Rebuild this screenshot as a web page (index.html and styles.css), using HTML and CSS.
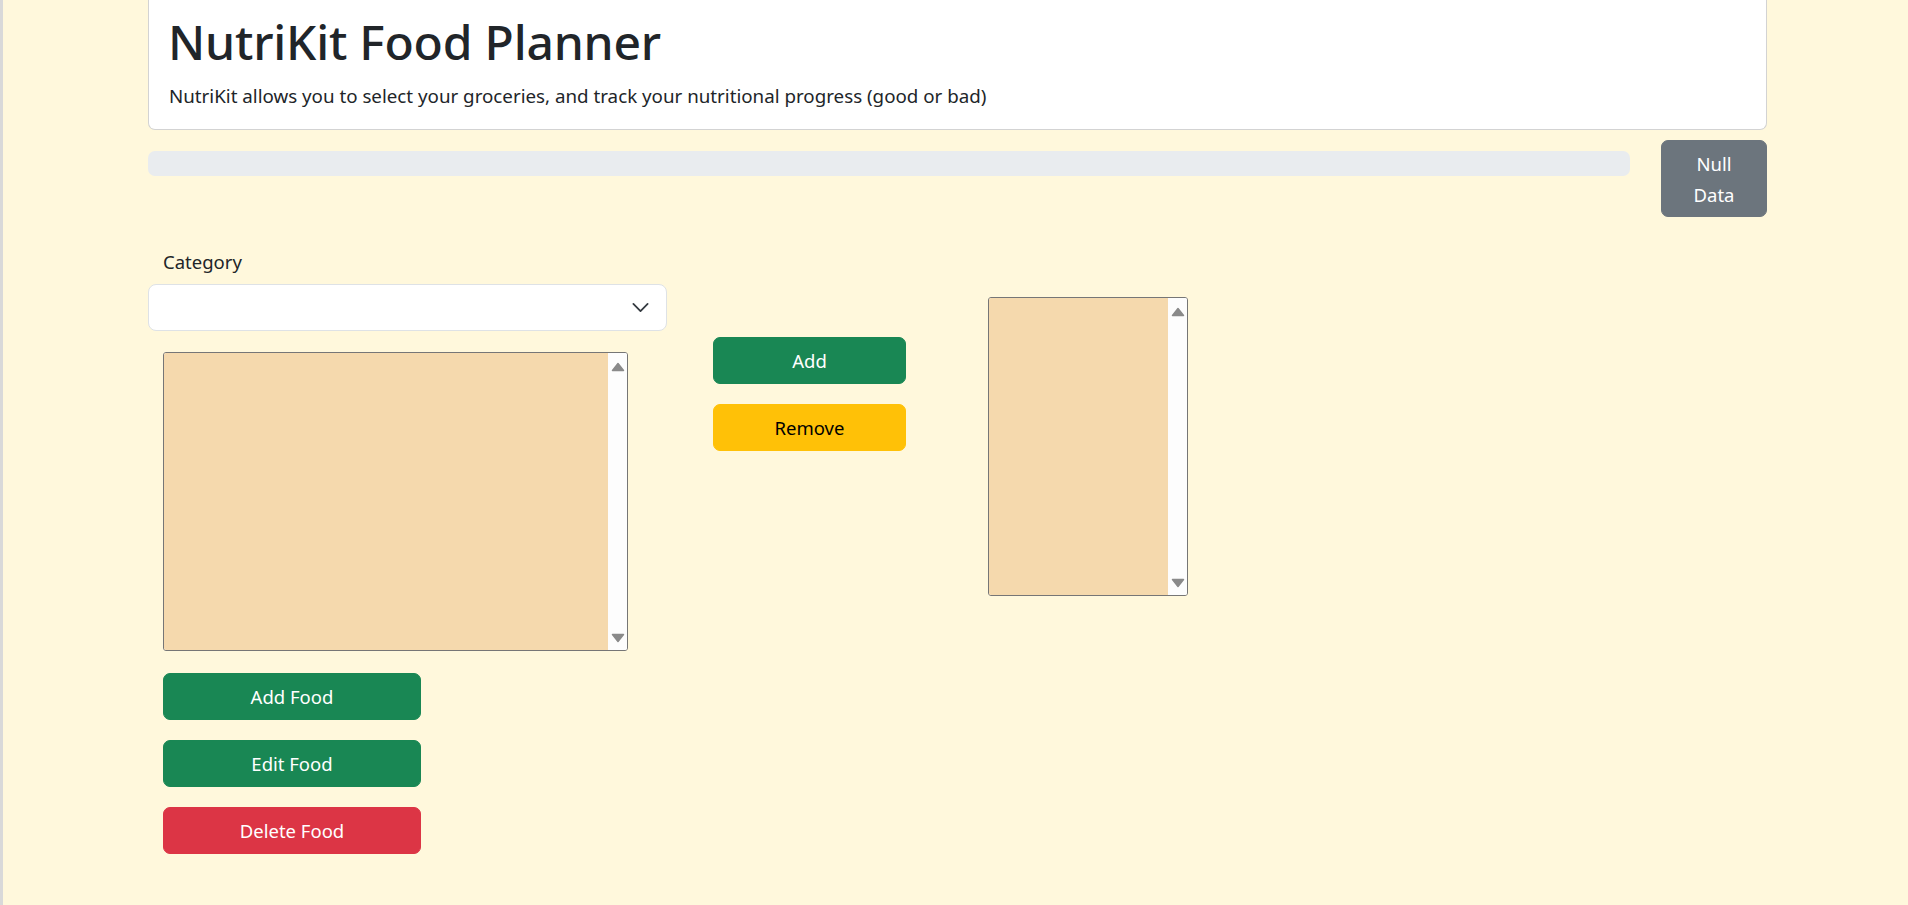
FILE: index.html
```html
<!DOCTYPE html>
<html lang="en">
<head>
<meta charset="utf-8">
<title>NutriKit Food Planner</title>
<link rel="stylesheet" href="styles.css">
</head>
<body>
<div class="page">
  <div class="container">
    <div class="card">
      <h1 class="title">NutriKit Food Planner</h1>
      <p class="lead">NutriKit allows you to select your groceries, and track your nutritional progress (good or bad)</p>
    </div>

    <div class="status-row">
      <div class="progress"></div>
      <button class="btn btn-secondary btn-null">Null<br>Data</button>
    </div>

    <div class="main-row">
      <div class="col-left">
        <label class="form-label">Category</label>
        <div class="select">
          <svg class="chevron" viewBox="0 0 16 16" width="19" height="19"><path d="m2 5 6 6 6-6" fill="none" stroke="#343a40" stroke-width="1.5" stroke-linecap="round" stroke-linejoin="round"/></svg>
        </div>
        <div class="listbox listbox-food">
          <div class="listbox-fill"></div>
          <div class="scrollbar">
            <svg class="arrow" viewBox="0 0 14 10" width="14" height="10"><path d="M7 1.5 L12.5 8.5 L1.5 8.5 Z" fill="#8a8a8a" stroke="#8a8a8a" stroke-width="1.5" stroke-linejoin="round"/></svg>
            <svg class="arrow" viewBox="0 0 14 10" width="14" height="10"><path d="M7 8.5 L12.5 1.5 L1.5 1.5 Z" fill="#8a8a8a" stroke="#8a8a8a" stroke-width="1.5" stroke-linejoin="round"/></svg>
          </div>
        </div>
        <div class="food-actions">
          <button class="btn btn-success btn-wide">Add Food</button>
          <button class="btn btn-success btn-wide">Edit Food</button>
          <button class="btn btn-danger btn-wide">Delete Food</button>
        </div>
      </div>

      <div class="col-mid">
        <button class="btn btn-success btn-mid">Add</button>
        <button class="btn btn-warning btn-mid">Remove</button>
      </div>

      <div class="col-right">
        <div class="listbox listbox-cart">
          <div class="listbox-fill"></div>
          <div class="scrollbar">
            <svg class="arrow" viewBox="0 0 14 10" width="14" height="10"><path d="M7 1.5 L12.5 8.5 L1.5 8.5 Z" fill="#8a8a8a" stroke="#8a8a8a" stroke-width="1.5" stroke-linejoin="round"/></svg>
            <svg class="arrow" viewBox="0 0 14 10" width="14" height="10"><path d="M7 8.5 L12.5 1.5 L1.5 1.5 Z" fill="#8a8a8a" stroke="#8a8a8a" stroke-width="1.5" stroke-linejoin="round"/></svg>
          </div>
        </div>
      </div>
    </div>
  </div>
</div>
</body>
</html>
```

FILE: styles.css
```css
html, body {
  margin: 0;
  padding: 0;
}

body {
  background: #fff8dc;
  font-family: "Noto Sans", "Open Sans", sans-serif;
  font-size: 20px;
  line-height: 1.5;
  color: #212529;
  height: 905px;
  overflow: hidden;
}

.page {
  border-left: 3px solid #d9d9d9;
  height: 905px;
  box-sizing: border-box;
}

.container {
  margin-left: 145px;
  width: 1619px;
}

.card {
  background: #ffffff;
  border: 1px solid #d3d3d3;
  border-top: none;
  border-radius: 0 0 7px 7px;
  padding: 13px 23px 0 19px;
  height: 130px;
  box-sizing: border-box;
}

.title {
  margin: 0;
  font-size: 48px;
  font-weight: 500;
  line-height: 1.2;
  letter-spacing: -0.2px;
}

.lead {
  margin: 11px 0 0 1px;
  font-size: 18.75px;
  line-height: 1.5;
}

.status-row {
  display: flex;
  align-items: flex-start;
  gap: 31px;
  margin-top: 10px;
}

.progress {
  flex: 1;
  height: 25px;
  margin-top: 11px;
  background: #e9ecef;
  border-radius: 7px;
}

.btn {
  font-family: inherit;
  font-size: 18.5px;
  line-height: 1.5;
  border: 1px solid transparent;
  border-radius: 7px;
  color: #ffffff;
  text-align: center;
  cursor: pointer;
  padding: 0;
  box-sizing: border-box;
}

.btn-secondary { background: #6c757d; border-color: #6c757d; }
.btn-success { background: #198754; border-color: #198754; }
.btn-danger { background: #dc3545; border-color: #dc3545; }
.btn-warning { background: #ffc107; border-color: #ffc107; color: #000000; }

.btn-null {
  width: 106px;
  height: 77px;
  line-height: 31px;
}

.main-row {
  display: flex;
  align-items: flex-start;
  margin-top: 32px;
}

.col-left {
  width: 519px;
  display: flex;
  flex-direction: column;
}

.form-label {
  display: block;
  padding-left: 15px;
  font-size: 18.5px;
  line-height: 26px;
  margin-bottom: 9px;
}

.select {
  position: relative;
  height: 47px;
  background: #ffffff;
  border: 1px solid #dee2e6;
  border-radius: 8px;
  box-sizing: border-box;
}

.chevron {
  position: absolute;
  right: 16px;
  top: 13px;
}

.listbox {
  display: flex;
  border: 1px solid #767676;
  border-radius: 3px;
  box-sizing: border-box;
  height: 299px;
  overflow: hidden;
  background: #fdfdfd;
}

.listbox-food {
  width: 465px;
  margin: 21px 0 0 15px;
}

.listbox-cart {
  width: 200px;
}

.listbox-fill {
  flex: 1;
  background: #f5d9ad;
}

.scrollbar {
  width: 19px;
  background: #fdfdfd;
  display: flex;
  flex-direction: column;
  justify-content: space-between;
  align-items: center;
  padding: 9px 0 7px;
}

.arrow {
  display: block;
}

.food-actions {
  display: flex;
  flex-direction: column;
  gap: 20px;
  margin: 22px 0 0 15px;
}

.btn-wide {
  width: 258px;
  height: 47px;
}

.col-mid {
  display: flex;
  flex-direction: column;
  gap: 20px;
  margin: 88px 0 0 46px;
}

.btn-mid {
  width: 193px;
  height: 47px;
}

.col-right {
  margin: 48px 0 0 82px;
}
```
